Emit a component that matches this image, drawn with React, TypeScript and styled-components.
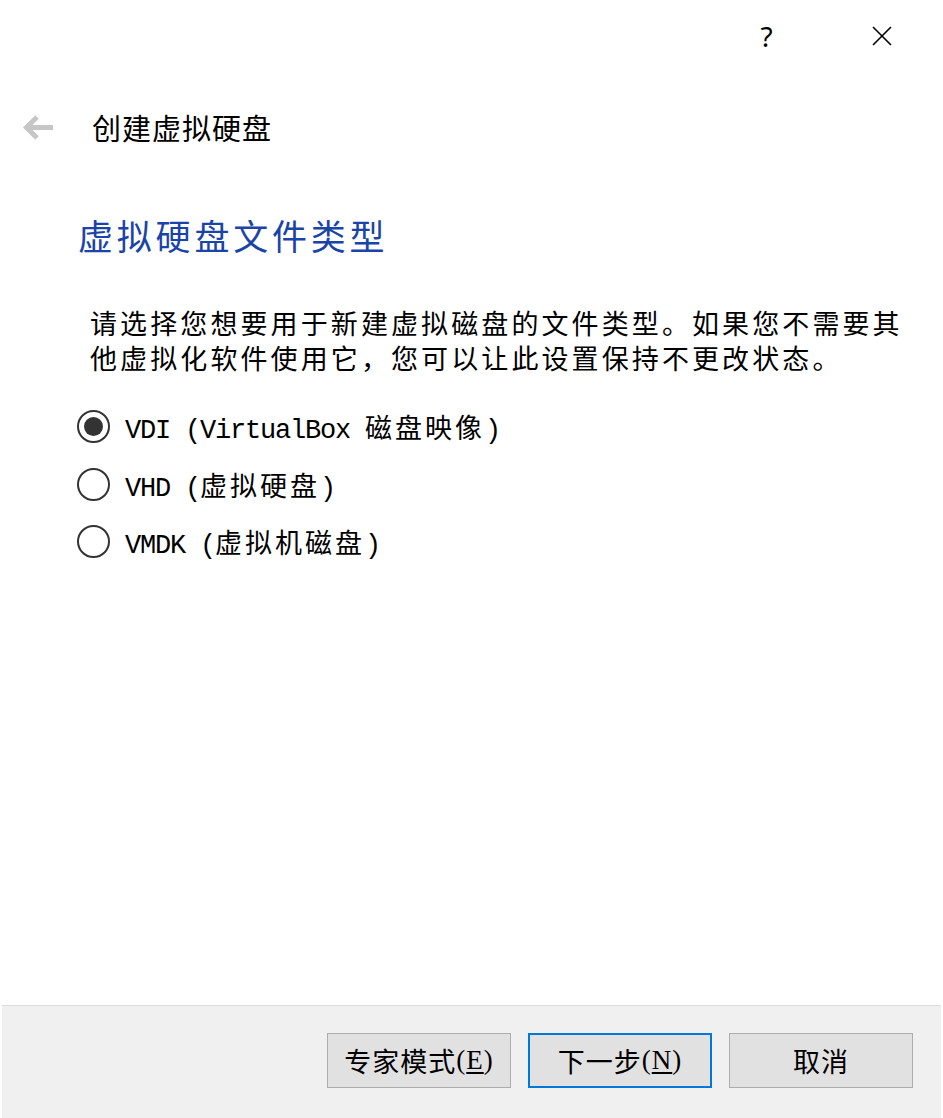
import React from "react";
import styled, { createGlobalStyle } from "styled-components";

const GlobalStyle = createGlobalStyle`
  html, body { margin: 0; padding: 0; background: #ffffff; }
  body { font-family: "Noto Sans CJK SC", "Noto Sans", sans-serif; }
  * { box-sizing: border-box; }
`;

const Window = styled.div`
  width: 943px;
  height: 1118px;
  display: flex;
  flex-direction: column;
  background: #ffffff;
  overflow: hidden;
`;

const TitleBar = styled.div`
  height: 72px;
  flex-shrink: 0;
  display: flex;
  justify-content: flex-end;
  align-items: center;
  padding-right: 4px;
`;

const TitleButton = styled.button`
  width: 115px;
  height: 72px;
  border: none;
  background: transparent;
  display: flex;
  align-items: center;
  justify-content: center;
  padding: 0;
  font-family: "Noto Sans", "DejaVu Sans", sans-serif;
  font-size: 28px;
  color: #000;
`;

const Header = styled.div`
  height: 110px;
  flex-shrink: 0;
  display: flex;
  align-items: center;
  padding-left: 22px;
  gap: 38px;
`;

const HeaderTitle = styled.div`
  font-family: "Noto Sans CJK SC", sans-serif;
  font-size: 29px;
  color: #000;
  letter-spacing: 1px;
`;

const Content = styled.div`
  flex: 1;
  display: flex;
  flex-direction: column;
  padding-left: 78px;
`;

const Subtitle = styled.h1`
  margin: 28px 0 0;
  font-family: "Noto Sans CJK SC", sans-serif;
  font-weight: 400;
  font-size: 35px;
  letter-spacing: 3.8px;
  line-height: 50px;
  color: #1a44a8;
`;

const Description = styled.p`
  margin: 45px 0 0 12px;
  font-family: "Noto Sans CJK SC", sans-serif;
  font-size: 27px;
  letter-spacing: 3.1px;
  line-height: 35px;
  color: #000;
`;

const RadioList = styled.div`
  display: flex;
  flex-direction: column;
  margin-top: 23px;
`;

const RadioRow = styled.label`
  height: 57.5px;
  display: flex;
  align-items: center;
  gap: 15px;
  margin-left: -1px;
`;

const RadioCircle = styled.span<{ $checked?: boolean }>`
  width: 33px;
  height: 33px;
  border-radius: 50%;
  border: 2px solid #333333;
  display: flex;
  align-items: center;
  justify-content: center;
  flex-shrink: 0;
  &::after {
    content: "";
    width: 19px;
    height: 19px;
    border-radius: 50%;
    background: #333333;
    display: ${(p) => (p.$checked ? "block" : "none")};
  }
`;

const Label = styled.span`
  font-family: "Noto Sans CJK SC", sans-serif;
  font-size: 27px;
  letter-spacing: 3px;
  color: #000;
  white-space: pre;
`;

const Latin = styled.span`
  font-family: "Liberation Mono", monospace;
  font-size: 27px;
  letter-spacing: -1.2px;
`;

const Footer = styled.div`
  height: 113px;
  flex-shrink: 0;
  margin: 0 2px;
  border-top: 1px solid #dcdcdc;
  background: #f0f0f0;
  display: flex;
  justify-content: flex-end;
  align-items: flex-start;
  padding: 27px 28px 0 0;
  gap: 17px;
`;

const Button = styled.button<{ $focused?: boolean }>`
  width: 184px;
  height: 55px;
  background: #e1e1e1;
  border: ${(p) => (p.$focused ? "2px solid #0078d7" : "1px solid #adadad")};
  font-family: "Noto Sans CJK SC", sans-serif;
  font-size: 27px;
  color: #000;
  display: flex;
  align-items: center;
  justify-content: center;
  padding: 0;
  letter-spacing: 1px;
`;

const Mnemonic = styled.span`
  font-family: "Liberation Serif", serif;
  font-size: 27px;
  text-decoration: underline;
  text-underline-offset: 3px;
`;

const Paren = styled.span`
  font-family: "Liberation Serif", serif;
  font-size: 27px;
`;

const BackArrow = () => (
  <svg width="32" height="27" viewBox="0 0 32 27">
    <path d="M31 13.5 H6" stroke="#c6c6c6" strokeWidth="5" fill="none" />
    <path d="M15 3 L4.5 13.5 L15 24" stroke="#c6c6c6" strokeWidth="5" fill="none" />
  </svg>
);

const CloseIcon = () => (
  <svg width="20" height="20" viewBox="0 0 20 20">
    <path d="M1 1 L19 19 M19 1 L1 19" stroke="#000" strokeWidth="1.6" fill="none" />
  </svg>
);

export default function App() {
  return (
    <>
      <GlobalStyle />
      <Window>
        <TitleBar>
          <TitleButton aria-label="帮助">?</TitleButton>
          <TitleButton aria-label="关闭">
            <CloseIcon />
          </TitleButton>
        </TitleBar>
        <Header>
          <BackArrow />
          <HeaderTitle>创建虚拟硬盘</HeaderTitle>
        </Header>
        <Content>
          <Subtitle>虚拟硬盘文件类型</Subtitle>
          <Description>
            请选择您想要用于新建虚拟磁盘的文件类型。如果您不需要其
            <br />
            他虚拟化软件使用它，您可以让此设置保持不更改状态。
          </Description>
          <RadioList>
            <RadioRow>
              <RadioCircle $checked />
              <Label>
                <Latin>VDI (VirtualBox </Latin>磁盘映像<Latin>)</Latin>
              </Label>
            </RadioRow>
            <RadioRow>
              <RadioCircle />
              <Label>
                <Latin>VHD (</Latin>虚拟硬盘<Latin>)</Latin>
              </Label>
            </RadioRow>
            <RadioRow>
              <RadioCircle />
              <Label>
                <Latin>VMDK (</Latin>虚拟机磁盘<Latin>)</Latin>
              </Label>
            </RadioRow>
          </RadioList>
        </Content>
        <Footer>
          <Button>
            专家模式<Paren>(</Paren>
            <Mnemonic>E</Mnemonic>
            <Paren>)</Paren>
          </Button>
          <Button $focused>
            下一步<Paren>(</Paren>
            <Mnemonic>N</Mnemonic>
            <Paren>)</Paren>
          </Button>
          <Button>取消</Button>
        </Footer>
      </Window>
    </>
  );
}
